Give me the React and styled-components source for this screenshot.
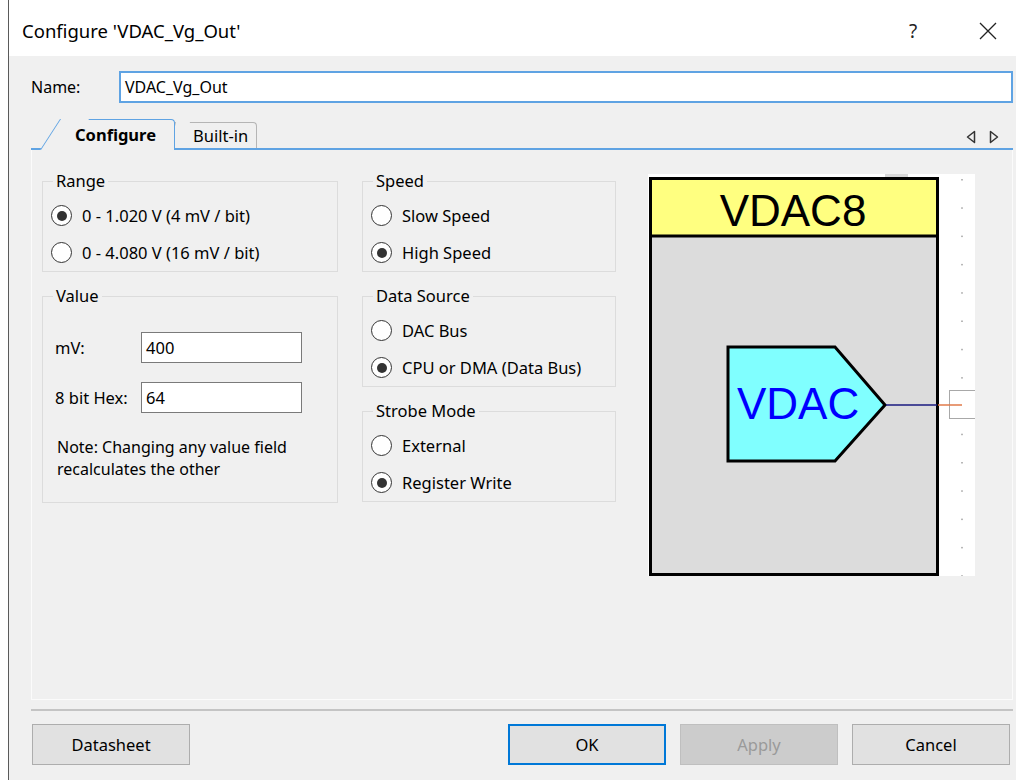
import styled, { createGlobalStyle } from 'styled-components'

const GlobalStyle = createGlobalStyle`
  html, body {
    margin: 0;
    background: #fff;
  }
  body {
    font-family: "Noto Sans", "Open Sans", sans-serif;
    font-size: 16px;
    color: #000;
  }
  * {
    box-sizing: border-box;
  }
`

const Window = styled.div`
  margin-left: 8px;
  width: 1008px;
  height: 780px;
  border-left: 1px solid #5a5a5a;
  background: #f0f0f0;
  display: flex;
  flex-direction: column;
`

const TitleBar = styled.div`
  height: 56px;
  background: #fff;
  display: flex;
  align-items: center;
  padding: 5px 0 0 13px;
`

const Title = styled.div`
  flex: 1;
  font-size: 18.5px;
`

const TitleButton = styled.div`
  width: ${p => p.$w}px;
  margin-right: ${p => p.$mr || 0}px;
  height: 40px;
  display: flex;
  align-items: center;
  justify-content: center;
  font-size: 19px;
  color: #222;
`

const Body = styled.div`
  flex: 1;
  display: flex;
  flex-direction: column;
  padding: 0 3px 0 22px;
`

const NameRow = styled.div`
  display: flex;
  align-items: center;
  margin-top: 15px;
  height: 32px;
`

const NameLabel = styled.label`
  width: 88px;
  font-size: 16px;
`

const NameInput = styled.div`
  flex: 1;
  height: 32px;
  border: 2px solid #5fa3e3;
  background: #fff;
  padding: 0 4px;
  display: flex;
  align-items: center;
  font-size: 16px;
`

const TabBar = styled.div`
  margin-top: 18px;
  height: 29px;
  display: flex;
  align-items: flex-end;
  border-bottom: 2px solid #5fa3e3;
`

const Tab = styled.div`
  position: relative;
  height: ${p => (p.$active ? 31 : 26)}px;
  margin-bottom: ${p => (p.$active ? -2 : 0)}px;
  margin-left: ${p => p.$ml || 0}px;
  padding: 0 ${p => p.$pr}px ${p => (p.$active ? 2 : 0)}px ${p => p.$pl}px;
  display: flex;
  align-items: center;
  font-size: 16.5px;
  font-weight: ${p => (p.$active ? 700 : 400)};
  background: #f0f0f0;
  border-top: 1px solid ${p => (p.$active ? '#5fa3e3' : '#b5b5b5')};
  border-right: 1px solid ${p => (p.$active ? '#5fa3e3' : '#b5b5b5')};
  border-top-right-radius: 4px;
  z-index: ${p => (p.$active ? 2 : 1)};

  &::before {
    content: '';
    position: absolute;
    left: ${p => -p.$slant}px;
    top: -1px;
    bottom: 0;
    width: ${p => p.$slant + 8}px;
    background: #f0f0f0;
    border-left: 1px solid ${p => (p.$active ? '#5fa3e3' : '#b5b5b5')};
    transform-origin: bottom left;
    transform: skewX(${p => -Math.atan(p.$slant / (p.$active ? 31 : 26)) * 57.3}deg);
    z-index: -1;
  }
`

const TabArrows = styled.div`
  margin-left: auto;
  margin-right: 14px;
  align-self: center;
  display: flex;
  gap: 13px;
  padding-top: 4px;
`

const Panel = styled.div`
  height: 550px;
  border: 1px solid #fbfbfb;
  border-top: none;
  padding: 21px 0 0 10px;
  display: flex;
  align-items: flex-start;
`

const Column = styled.div`
  width: ${p => p.$w}px;
  margin-right: ${p => p.$mr || 0}px;
  display: flex;
  flex-direction: column;
  gap: 14px;
`

const Group = styled.fieldset`
  margin: 0;
  padding: ${p => p.$pad || '6px 0 0 8px'};
  border: 1px solid #dcdcdc;
  min-width: 0;
`

const Legend = styled.legend`
  margin-left: 2px;
  padding: 0 3px;
  font-size: 16.5px;
  line-height: 20px;
`

const RadioRow = styled.div`
  height: 37px;
  display: flex;
  align-items: center;
  gap: 10px;
  font-size: 16.5px;
`

const RadioDot = styled.span`
  flex: none;
  width: 21px;
  height: 21px;
  border-radius: 50%;
  border: 1.5px solid #333;
  background: #fff;
  display: flex;
  align-items: center;
  justify-content: center;

  &::after {
    content: '';
    width: 10px;
    height: 10px;
    border-radius: 50%;
    background: ${p => (p.$on ? '#333' : 'transparent')};
  }
`

const FieldRow = styled.div`
  display: flex;
  align-items: center;
  height: 31px;
  margin: 0 0 ${p => p.$mb || 0}px 4px;
`

const FieldLabel = styled.span`
  width: 86px;
  font-size: 16.5px;
`

const FieldInput = styled.div`
  width: 161px;
  height: 31px;
  border: 1px solid #7a7a7a;
  background: #fff;
  padding: 0 4px;
  display: flex;
  align-items: center;
  font-size: 16.5px;
`

const Note = styled.p`
  margin: 23px 0 0 6px;
  font-size: 16px;
  line-height: 22px;
`

const Diagram = styled.svg`
  display: block;
  margin-top: 3px;
`

const Footer = styled.div`
  margin-top: 9px;
  border-top: 2px solid #c4c4c4;
  padding: 13px 3px 0 1px;
  display: flex;
  align-items: center;
`

const Button = styled.div`
  width: 158px;
  height: 41px;
  margin-left: ${p => p.$ml || 0}px;
  display: flex;
  align-items: center;
  justify-content: center;
  font-size: 16.5px;
  background: ${p => (p.$disabled ? '#cccccc' : '#e1e1e1')};
  color: ${p => (p.$disabled ? '#9a9a9a' : '#000')};
  border: ${p => (p.$primary ? '2px solid #0078d7' : p.$disabled ? '1px solid #bfbfbf' : '1px solid #adadad')};
`

const Radio = ({ on, children }) => (
  <RadioRow>
    <RadioDot $on={on} />
    {children}
  </RadioRow>
)

const gridDots = Array.from({ length: 15 }, (_, i) => 5 + i * 28.3)

function Symbol() {
  return (
    <Diagram width="327" height="402" viewBox="0 0 327 402">
      <rect x="0" y="0" width="327" height="402" fill="#fff" />
      <rect x="237" y="0" width="23" height="3" fill="#d8d8d8" />
      {gridDots.map(y => (
        <rect key={y} x="313" y={y} width="2" height="1.5" fill="#b8b8b8" />
      ))}
      <rect x="2.5" y="4.5" width="287" height="396" fill="#dcdcdc" stroke="#000" strokeWidth="3" />
      <rect x="4" y="6" width="284" height="56" fill="#ffff80" />
      <line x1="2.5" y1="62" x2="289.5" y2="62" stroke="#000" strokeWidth="3" />
      <text x="145" y="52" textAnchor="middle" fontFamily="'Liberation Sans', Arial, sans-serif" fontSize="44" fill="#000">
        VDAC8
      </text>
      <polygon points="80,173 187,173 237,231 187,287 80,287" fill="#80ffff" stroke="#000" strokeWidth="3" />
      <text x="89" y="245" fontFamily="'Liberation Sans', Arial, sans-serif" fontSize="44" fill="#0000ff">
        VDAC
      </text>
      <line x1="238" y1="231" x2="289" y2="231" stroke="#1a1a80" strokeWidth="1.5" />
      <rect x="301.5" y="216.5" width="27" height="28" fill="#fff" stroke="#a8a8a8" />
      <line x1="290" y1="231" x2="314" y2="231" stroke="#e07a4a" strokeWidth="1.5" />
    </Diagram>
  )
}

export default function App() {
  return (
    <>
      <GlobalStyle />
      <Window>
        <TitleBar>
          <Title>Configure 'VDAC_Vg_Out'</Title>
          <TitleButton $w={50} $mr={22}>?</TitleButton>
          <TitleButton $w={56}>
            <svg width="18" height="18" viewBox="0 0 18 18">
              <path d="M1 1 L17 17 M17 1 L1 17" stroke="#222" strokeWidth="1.3" />
            </svg>
          </TitleButton>
        </TitleBar>
        <Body>
          <NameRow>
            <NameLabel>Name:</NameLabel>
            <NameInput>VDAC_Vg_Out</NameInput>
          </NameRow>
          <TabBar>
            <Tab $active $ml={29} $pl={15} $pr={18} $slant={20}>Configure</Tab>
            <Tab $pl={18} $pr={8} $slant={6}>Built-in</Tab>
            <TabArrows>
              <svg width="10" height="14" viewBox="0 0 10 14">
                <path d="M8.5 1.5 L1.5 7 L8.5 12.5 Z" fill="none" stroke="#333" strokeWidth="1.5" strokeLinejoin="round" />
              </svg>
              <svg width="10" height="14" viewBox="0 0 10 14">
                <path d="M1.5 1.5 L8.5 7 L1.5 12.5 Z" fill="none" stroke="#333" strokeWidth="1.5" strokeLinejoin="round" />
              </svg>
            </TabArrows>
          </TabBar>
          <Panel>
            <Column $w={296} $mr={24}>
              <Group>
                <Legend>Range</Legend>
                <Radio on>0 - 1.020 V (4 mV / bit)</Radio>
                <Radio>0 - 4.080 V (16 mV / bit)</Radio>
              </Group>
              <Group $pad="26px 0 22px 8px">
                <Legend>Value</Legend>
                <FieldRow $mb={19}>
                  <FieldLabel>mV:</FieldLabel>
                  <FieldInput>400</FieldInput>
                </FieldRow>
                <FieldRow>
                  <FieldLabel>8 bit Hex:</FieldLabel>
                  <FieldInput>64</FieldInput>
                </FieldRow>
                <Note>
                  Note: Changing any value field
                  <br />
                  recalculates the other
                </Note>
              </Group>
            </Column>
            <Column $w={254} $mr={32}>
              <Group>
                <Legend>Speed</Legend>
                <Radio>Slow Speed</Radio>
                <Radio on>High Speed</Radio>
              </Group>
              <Group>
                <Legend>Data Source</Legend>
                <Radio>DAC Bus</Radio>
                <Radio on>CPU or DMA (Data Bus)</Radio>
              </Group>
              <Group>
                <Legend>Strobe Mode</Legend>
                <Radio>External</Radio>
                <Radio on>Register Write</Radio>
              </Group>
            </Column>
            <Symbol />
          </Panel>
          <Footer>
            <Button>Datasheet</Button>
            <Button $primary $ml={318}>OK</Button>
            <Button $disabled $ml={14}>Apply</Button>
            <Button $ml={14}>Cancel</Button>
          </Footer>
        </Body>
      </Window>
    </>
  )
}
